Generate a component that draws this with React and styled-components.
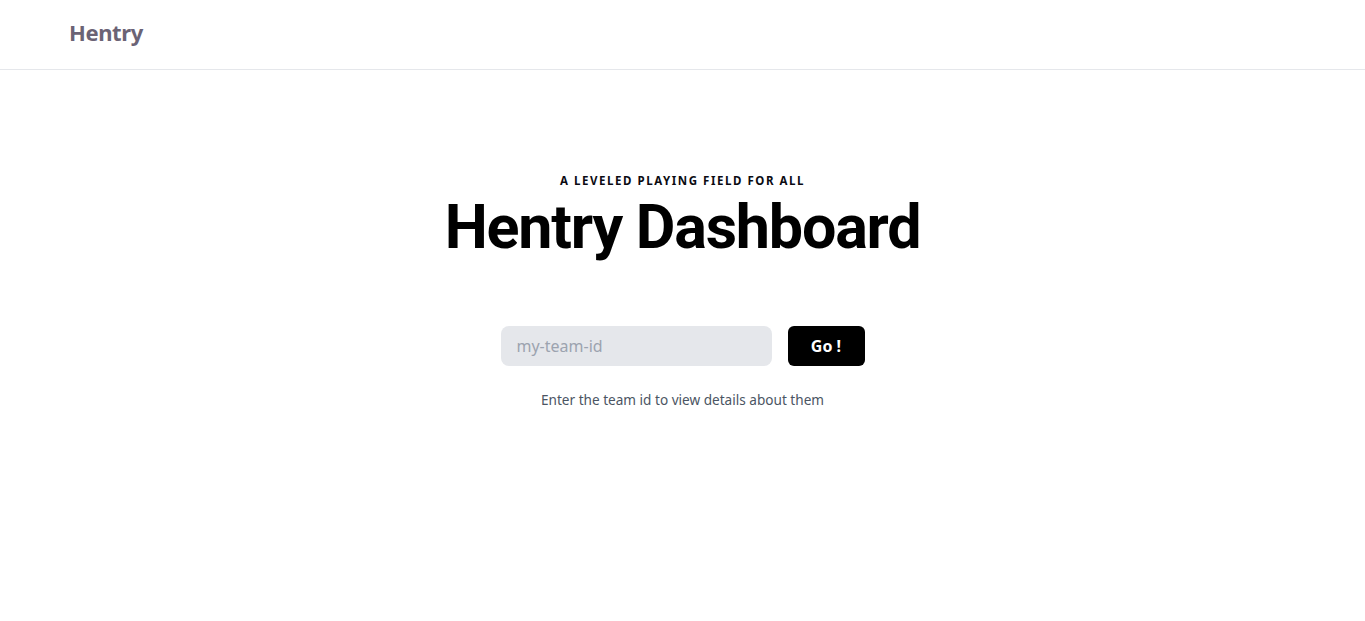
import React, {useState} from 'react'
import styled, {createGlobalStyle} from 'styled-components'

const GlobalStyle = createGlobalStyle`
  * { box-sizing: border-box; }
  body {
    margin: 0;
    background: #ffffff;
    font-family: 'Noto Sans', 'Open Sans', sans-serif;
  }
`

const Header = styled.header`
  height: 70px;
  border-bottom: 1px solid #e5e7eb;
  display: flex;
  align-items: center;
  padding: 0 0 6px 69px;
`

const Logo = styled.a`
  font-size: 22px;
  font-weight: 700;
  color: #6b6375;
  letter-spacing: -0.4px;
  text-decoration: none;
`

const Hero = styled.main`
  display: flex;
  flex-direction: column;
  align-items: center;
  padding-top: 103px;
`

const Eyebrow = styled.p`
  margin: 0;
  font-size: 11.5px;
  font-weight: 700;
  letter-spacing: 1.55px;
  color: #0b0b12;
  line-height: 16px;
`

const Title = styled.h1`
  margin: 2px 0 0;
  font-family: Roboto, 'Noto Sans', sans-serif;
  font-size: 61px;
  font-weight: 700;
  letter-spacing: -1.2px;
  line-height: 72px;
  color: #000000;
`

const Form = styled.form`
  display: flex;
  gap: 16px;
  margin-top: 63px;
`

const Input = styled.input`
  width: 271px;
  height: 40px;
  border: none;
  border-radius: 8px;
  background: #e5e7eb;
  padding: 0 16px;
  font-family: inherit;
  font-size: 16px;
  color: #111827;
  outline: none;
  &::placeholder { color: #9ca3af; }
`

const Button = styled.button`
  width: 77px;
  height: 40px;
  border: none;
  border-radius: 6px;
  background: #000000;
  color: #ffffff;
  font-family: inherit;
  font-size: 16px;
  font-weight: 700;
  cursor: pointer;
`

const Hint = styled.p`
  margin: 24px 0 0;
  font-size: 13.6px;
  color: #4b5563;
`

export default function App() {
  const [team, setTeam] = useState('')
  return (
    <>
      <GlobalStyle />
      <Header>
        <Logo href="#">Hentry</Logo>
      </Header>
      <Hero>
        <Eyebrow>A LEVELED PLAYING FIELD FOR ALL</Eyebrow>
        <Title>Hentry Dashboard</Title>
        <Form onSubmit={(e) => e.preventDefault()}>
          <Input
            placeholder="my-team-id"
            value={team}
            onChange={(e) => setTeam(e.target.value)}
          />
          <Button type="submit">Go !</Button>
        </Form>
        <Hint>Enter the team id to view details about them</Hint>
      </Hero>
    </>
  )
}
